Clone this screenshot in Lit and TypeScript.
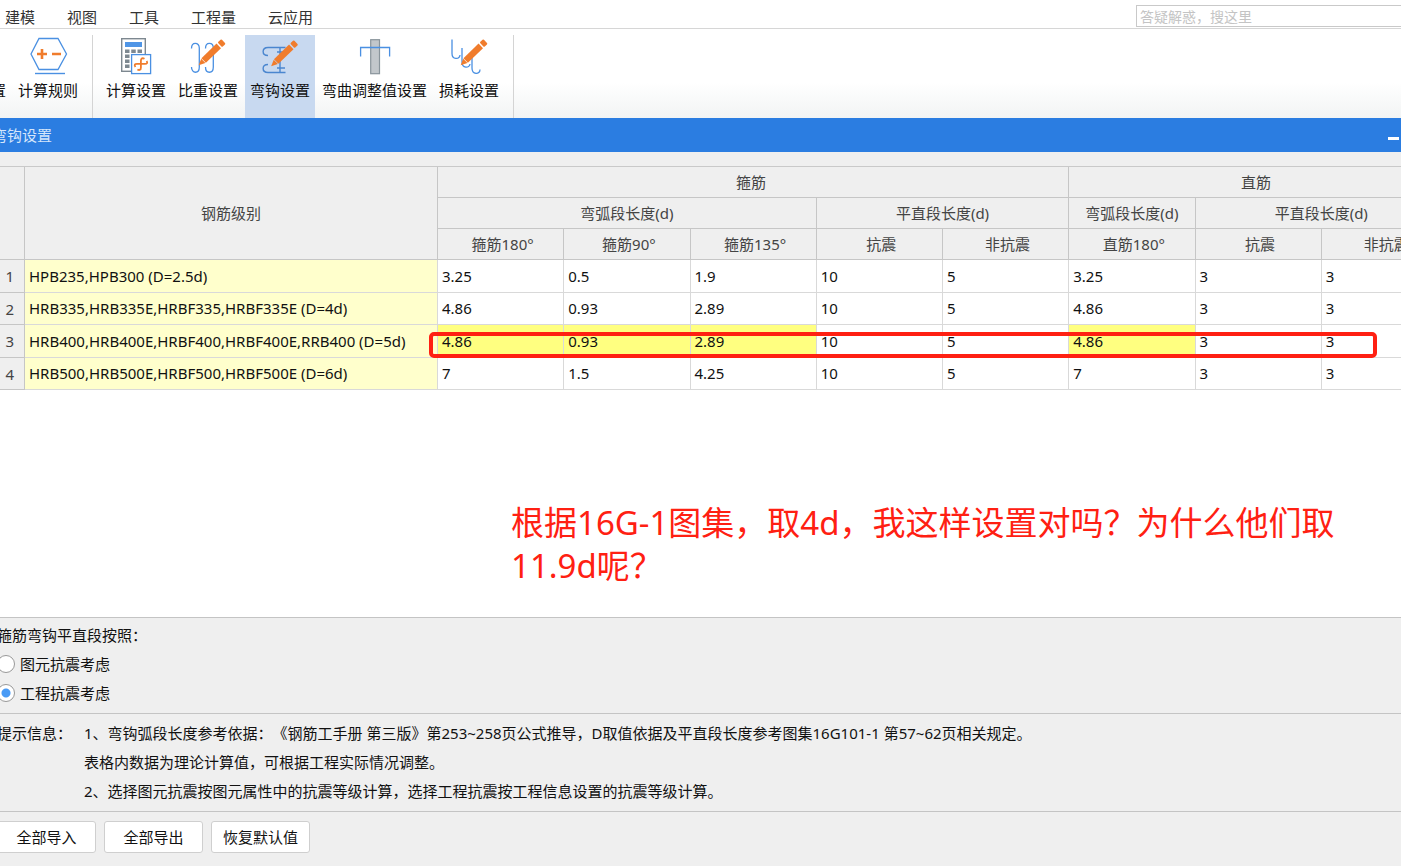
import { LitElement, html, css, svg } from "lit";
import { customElement, state } from "lit/decorators.js";

const pencil = (x: number, y: number) => svg`
  <g transform="translate(${x} ${y}) rotate(-44)">
    <path d="M-0.5 0 L6 -3 V3 Z" fill="#f07c2c" />
    <rect x="6.5" y="-3.2" width="21" height="6.4" fill="#f07c2c" />
    <rect x="29" y="-3.2" width="5" height="6.4" rx="1" fill="#f07c2c" />
  </g>`;

const icons = {
  rule: svg`
    <path d="M3 18 L11 2.5 H30 L38.5 18 L30 33.5 H11 Z" fill="none" stroke="#4a90e2" stroke-width="1.3" />
    <path d="M7 37.5 H37" stroke="#4a90e2" stroke-width="1.4" />
    <path d="M9 18 H19 M14 13 V23 M24 18 H33" stroke="#f07c2c" stroke-width="2.6" />`,
  calc: svg`
    <rect x="5.7" y="2.7" width="23.6" height="32.6" fill="#fff" stroke="#7d8890" stroke-width="1.4" />
    <rect x="9" y="6" width="17" height="5" fill="#4f95e6" />
    <path d="M9 15.2 H26 M9 20.2 H26 M9 25.2 H26 M9 30.2 H26" stroke="#7d8890" stroke-width="3.4" stroke-dasharray="4.5 1.75" />
    <rect x="15.6" y="18.6" width="19" height="19" fill="#fff" stroke="#4a90e2" stroke-width="1.3" />
    <path d="M28.5 22.8 C26 21.4 24.9 22.8 24.9 25 V31.4 C24.9 34 23.4 34.6 21.4 33.4 M19.4 31 C18 28.6 18.8 27.9 21 27.9 H29 C31.2 27.9 31.8 26.8 30.6 25" fill="none" stroke="#f07c2c" stroke-width="1.8" />`,
  weight: svg`
    <path d="M3.5 12.5 C3.5 5.5 11.3 6 11.3 12 V31 C11.3 38 3.5 38 3.5 31 M17.5 12.5 C17.5 5.5 25.3 6 25.3 12 V31 C25.3 38 17.5 38 17.5 31" fill="none" stroke="#4a90e2" stroke-width="1.3" />
    ${pencil(11, 29)}`,
  hook: svg`
    <path d="M25.5 11.5 H8 C1.5 11.5 1.5 19.5 8 19.5 M25.5 36.5 H8 C1.5 36.5 1.5 28.5 8 28.5 M20 11.5 V36.5 M17 16 H25 M17 32 H25" fill="none" stroke="#4a86cf" stroke-width="1.4" />
    ${pencil(11.5, 30)}`,
  bend: svg`
    <rect x="15.7" y="3.7" width="8.8" height="34" fill="#c2c7cb" stroke="#89949b" stroke-width="1.2" />
    <path d="M5.6 20.5 V11.5 H34.6 V20.5" fill="none" stroke="#4a90e2" stroke-width="1.3" />`,
  loss: svg`
    <path d="M3 3.5 V17.5 C3 24 10.5 23.5 11 19 M13 12 V26 C13 32.5 20.5 32.5 21 28 M23 22 V32 C23 39 31 39 31 33.5" fill="none" stroke="#4a90e2" stroke-width="1.3" />
    ${pencil(12, 29)}`,
};

@customElement("ribbon-button")
class RibbonButton extends LitElement {
  static properties = {
    label: {},
    icon: {},
    active: { type: Boolean },
  };
  declare label: string;
  declare icon: keyof typeof icons | undefined;
  declare active: boolean;

  static styles = css`
    :host {
      display: flex;
    }
    .button {
      display: flex;
      flex-direction: column;
      align-items: center;
      gap: 4px;
      margin: 0;
      padding: 1px 5px 0;
      border: 0;
      background: none;
      color: #111;
      font: inherit;
      white-space: nowrap;
    }
    .active {
      background: #c8d9f0;
    }
    .icon {
      width: 40px;
      height: 40px;
    }
    .bare {
      padding-top: 45px;
    }
  `;

  render() {
    return html`<button
      class="button ${this.active ? "active" : ""} ${this.icon ? "" : "bare"}"
      aria-pressed=${this.active ? "true" : "false"}
    >
      ${this.icon
        ? html`<svg class="icon" viewBox="0 0 40 40" aria-hidden="true">${icons[this.icon]}</svg>`
        : ""}
      <span>${this.label}</span>
    </button>`;
  }
}

interface Row {
  grade: string;
  values: string[];
  changed?: number[];
}

const rows: Row[] = [
  { grade: "HPB235,HPB300 (D=2.5d)", values: ["3.25", "0.5", "1.9", "10", "5", "3.25", "3", "3"] },
  { grade: "HRB335,HRB335E,HRBF335,HRBF335E (D=4d)", values: ["4.86", "0.93", "2.89", "10", "5", "4.86", "3", "3"] },
  {
    grade: "HRB400,HRB400E,HRBF400,HRBF400E,RRB400 (D=5d)",
    values: ["4.86", "0.93", "2.89", "10", "5", "4.86", "3", "3"],
    changed: [0, 1, 2, 5],
  },
  { grade: "HRB500,HRB500E,HRBF500,HRBF500E (D=6d)", values: ["7", "1.5", "4.25", "10", "5", "7", "3", "3"] },
];

@customElement("app-root")
class AppRoot extends LitElement {
  @state() private basis = "project";

  static styles = css`
    :host {
      display: block;
      height: 100vh;
      overflow: hidden;
      background: #fff;
      color: #111;
      font: 15px/20px "Noto Sans", "Noto Sans CJK SC", sans-serif;
      text-spacing-trim: space-all;
    }
    .shell {
      display: flex;
      flex-direction: column;
      height: 100%;
      margin-left: -8px;
    }
    .menubar {
      display: flex;
      align-items: center;
      justify-content: space-between;
      height: 28px;
      padding-left: 13px;
      border-bottom: 1px solid #d6d6d6;
    }
    .menus {
      display: flex;
      gap: 32px;
      padding-top: 5px;
    }
    .menu {
      color: #333;
      text-decoration: none;
    }
    .search {
      box-sizing: border-box;
      width: 280px;
      height: 22px;
      margin: 4px -15px 0 0;
      padding: 0 3px;
      border: 1px solid #c9c9c9;
      background: #fff;
      font: inherit;
      font-size: 14px;
    }
    .search::placeholder {
      color: #c4c4c4;
    }
    .ribbon {
      display: flex;
      height: 83px;
      padding-top: 6px;
      background: linear-gradient(#fff 60%, #f2f4f4);
    }
    .group {
      display: flex;
      gap: 2px;
      padding: 0 9px 0 8px;
      border-right: 1px solid #d4d4d4;
    }
    .first {
      padding-left: 0;
      margin-left: -6px;
    }
    .titlebar {
      display: flex;
      align-items: center;
      justify-content: space-between;
      height: 34px;
      background: #2b7de1;
      color: #d5e6fb;
    }
    .title {
      margin: 0;
      font-size: 15px;
      font-weight: 400;
    }
    .minimize {
      display: flex;
      margin: 0;
      padding: 6px 2px 0;
      border: 0;
      background: none;
    }
    .dash {
      width: 11px;
      height: 3px;
      background: #fff;
    }
    .sheet {
      position: relative;
      flex: 1;
      min-height: 0;
      overflow: hidden;
      border-top: 14px solid #efefef;
    }
    .grid {
      width: 1456px;
      table-layout: fixed;
      border-spacing: 0;
      border-top: 1px solid #c9c9c9;
    }
    .num {
      width: 33px;
    }
    .grade {
      width: 413px;
    }
    .grid th,
    .grid td {
      box-sizing: border-box;
      padding: 0 4px 1px;
      border-right: 1px solid #d9d9d9;
      border-bottom: 1px solid #d9d9d9;
      font-weight: 400;
      text-align: left;
      white-space: nowrap;
    }
    .grid thead th {
      height: 31px;
      padding: 0;
      border-color: #c6c6c6;
      background: #efefef;
      color: #444;
      text-align: center;
    }
    .grid thead .family {
      padding-right: 4px;
    }
    .grid thead .leaf {
      padding-left: 4px;
    }
    .grid tbody tr {
      height: 32px;
    }
    .grid tbody tr:nth-child(odd) {
      height: 33px;
    }
    .grid tbody .index {
      padding: 0 10px 0 0;
      border-color: #c6c6c6;
      background: #efefef;
      color: #444;
      text-align: right;
    }
    .grid .name {
      background: #ffffcc;
    }
    .grid .changed {
      background: #ffff80;
    }
    .mark {
      position: absolute;
      box-sizing: border-box;
      left: 437px;
      top: 166px;
      width: 948px;
      height: 26px;
      border: 4px solid #ff2012;
      border-radius: 5px;
    }
    .note {
      position: absolute;
      left: 519px;
      top: 335px;
      margin: 0;
      color: #ff2012;
      font-size: 33px;
      line-height: 43px;
      white-space: nowrap;
    }
    .panel {
      border-top: 1px solid #c4c4c4;
      background: #efefef;
    }
    .basis {
      display: flex;
      flex-direction: column;
      gap: 9px;
      margin: 0;
      padding: 7px 0 10px 5px;
      border: 0;
    }
    .basis legend {
      float: left;
      padding: 0;
    }
    .choice {
      display: flex;
      align-items: center;
      gap: 5px;
    }
    .radio {
      appearance: none;
      box-sizing: border-box;
      width: 18px;
      height: 18px;
      margin: 0;
      border: 1px solid #999;
      border-radius: 50%;
      background: #fff;
    }
    .radio:checked {
      background: radial-gradient(circle, #4a9bf5 0 4px, #fff 5px);
    }
    .tips {
      display: flex;
      gap: 12px;
      padding: 5px 0 5px 5px;
      line-height: 29px;
    }
    .tips p {
      margin: 0;
    }
    .actions {
      display: flex;
      gap: 8px;
      padding: 9px 0 13px 5px;
    }
    .action {
      width: 99px;
      height: 32px;
      padding: 0;
      border: 1px solid #cfcfcf;
      border-radius: 3px;
      background: #fff;
      color: #111;
      font: inherit;
    }
  `;

  private choice(value: string, label: string) {
    return html`<label class="choice">
      <input
        class="radio"
        type="radio"
        name="basis"
        .value=${value}
        .checked=${this.basis === value}
        @change=${() => (this.basis = value)}
      />${label}</label
    >`;
  }

  render() {
    return html`<div class="shell">
      <header class="menubar">
        <nav class="menus">
          ${["建模", "视图", "工具", "工程量", "云应用"].map((m) => html`<a class="menu" href="#">${m}</a>`)}
        </nav>
        <input class="search" type="search" aria-label="搜索" placeholder="答疑解惑，搜这里" />
      </header>
      <div class="ribbon">
        <div class="group first">
          <ribbon-button label="置"></ribbon-button>
          <ribbon-button label="计算规则" icon="rule"></ribbon-button>
        </div>
        <div class="group">
          <ribbon-button label="计算设置" icon="calc"></ribbon-button>
          <ribbon-button label="比重设置" icon="weight"></ribbon-button>
          <ribbon-button label="弯钩设置" icon="hook" active></ribbon-button>
          <ribbon-button label="弯曲调整值设置" icon="bend"></ribbon-button>
          <ribbon-button label="损耗设置" icon="loss"></ribbon-button>
        </div>
      </div>
      <div class="titlebar">
        <h1 class="title">弯钩设置</h1>
        <button class="minimize" aria-label="最小化"><span class="dash"></span></button>
      </div>
      <main class="sheet">
        <table class="grid">
          <colgroup>
            <col class="num" />
            <col class="grade" />
            <col span="8" />
          </colgroup>
          <thead>
            <tr>
              <th rowspan="3"></th>
              <th rowspan="3">钢筋级别</th>
              <th class="family" colspan="5">箍筋</th>
              <th class="family" colspan="3">直筋</th>
            </tr>
            <tr>
              <th colspan="3">弯弧段长度(d)</th>
              <th colspan="2">平直段长度(d)</th>
              <th>弯弧段长度(d)</th>
              <th colspan="2">平直段长度(d)</th>
            </tr>
            <tr>
              ${["箍筋180°", "箍筋90°", "箍筋135°", "抗震", "非抗震", "直筋180°", "抗震", "非抗震"].map(
                (h) => html`<th class="leaf">${h}</th>`,
              )}
            </tr>
          </thead>
          <tbody>
            ${rows.map(
              (row, i) => html`<tr>
                <th class="index">${i + 1}</th>
                <td class="name">${row.grade}</td>
                ${row.values.map(
                  (v, c) => html`<td class=${row.changed?.includes(c) ? "changed" : "value"}>${v}</td>`,
                )}
              </tr>`,
            )}
          </tbody>
        </table>
        <div class="mark"></div>
        <p class="note">根据16G-1图集，取4d，我这样设置对吗？为什么他们取<br />11.9d呢？</p>
      </main>
      <section class="panel">
        <fieldset class="basis">
          <legend>箍筋弯钩平直段按照：</legend>
          ${this.choice("element", "图元抗震考虑")} ${this.choice("project", "工程抗震考虑")}
        </fieldset>
      </section>
      <section class="panel tips">
        <span>提示信息：</span>
        <div>
          <p>1、弯钩弧段长度参考依据：《钢筋工手册 第三版》第253~258页公式推导，D取值依据及平直段长度参考图集16G101-1 第57~62页相关规定。</p>
          <p>表格内数据为理论计算值，可根据工程实际情况调整。</p>
          <p>2、选择图元抗震按图元属性中的抗震等级计算，选择工程抗震按工程信息设置的抗震等级计算。</p>
        </div>
      </section>
      <footer class="panel actions">
        <button class="action">全部导入</button>
        <button class="action">全部导出</button>
        <button class="action">恢复默认值</button>
      </footer>
    </div>`;
  }
}
